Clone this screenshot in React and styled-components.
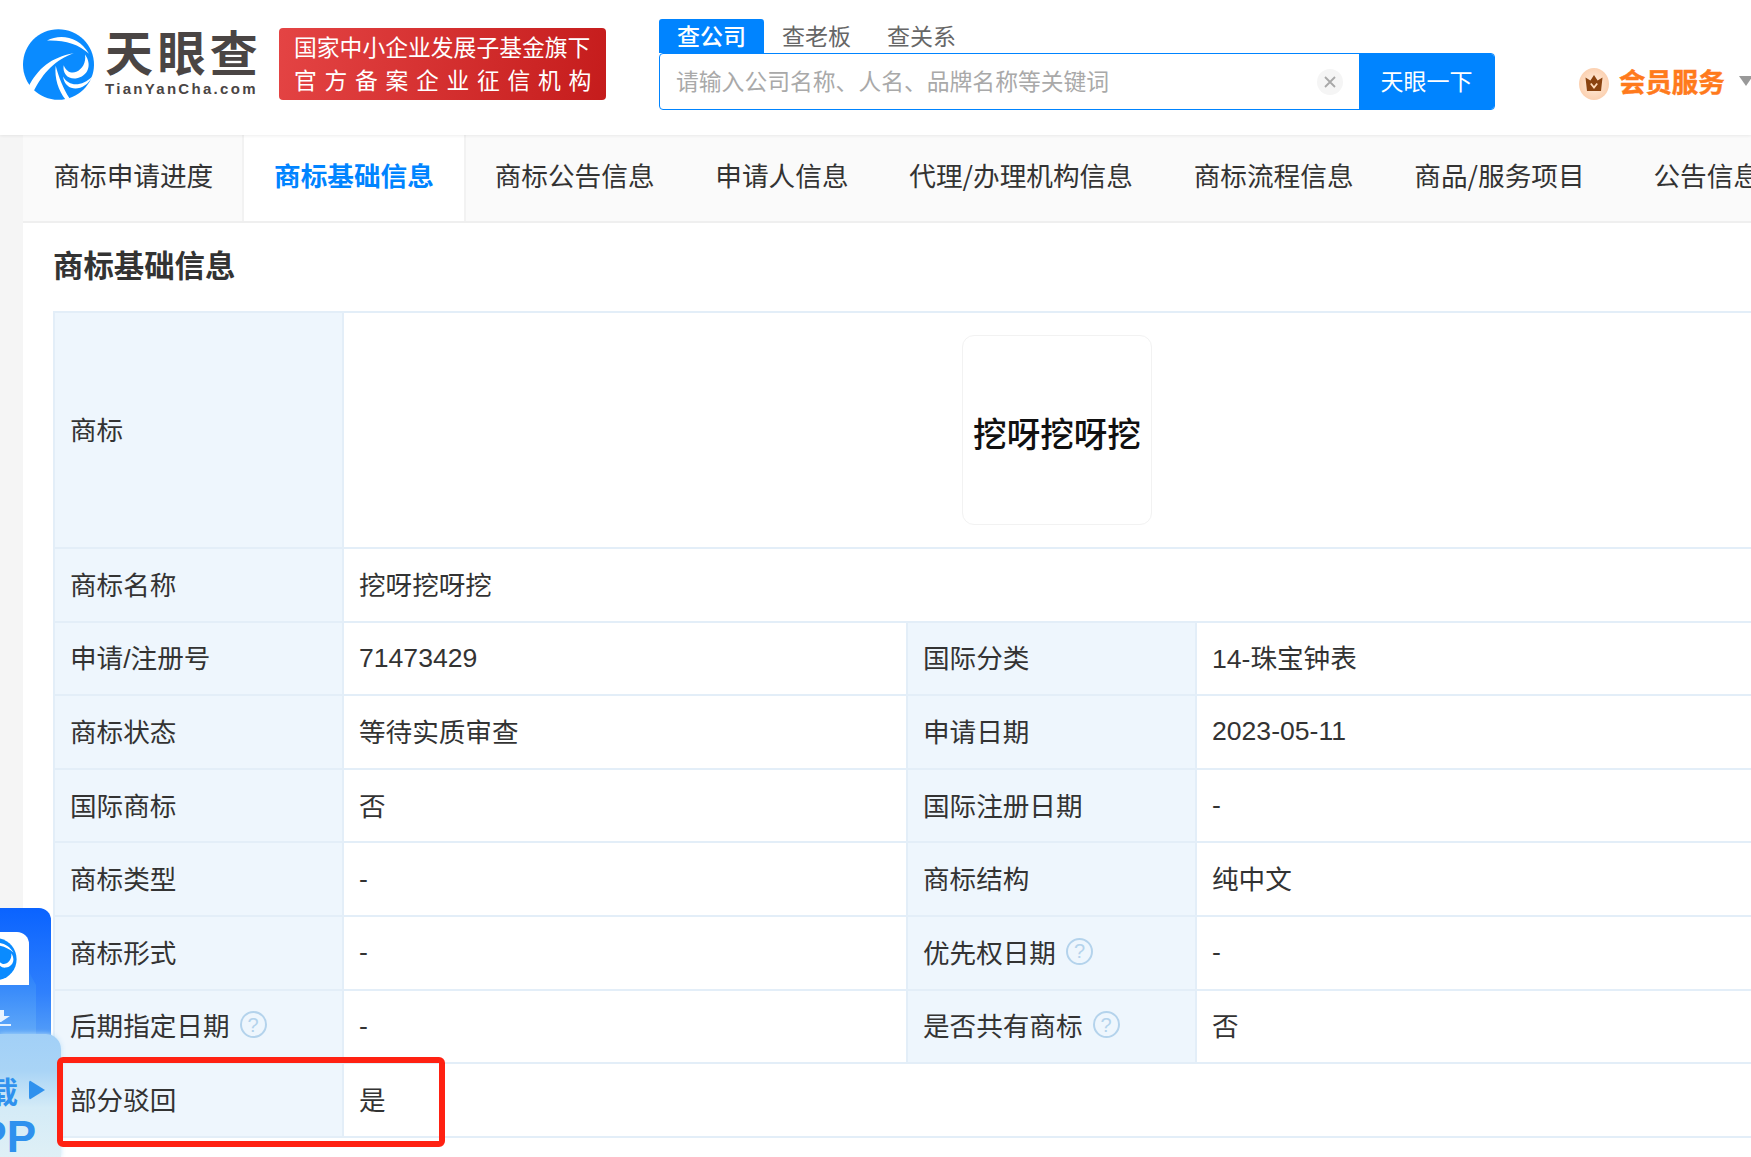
import React from "react";
import styled, { createGlobalStyle } from "styled-components";

const Global = createGlobalStyle`
  html, body { margin: 0; padding: 0; background: #fff; height: 100%; overflow: hidden; }
  * { box-sizing: border-box; }
  body { font-family: "Liberation Sans", "Noto Sans CJK SC", sans-serif; color: #333; }
`;

const Page = styled.div`
  position: relative;
  width: 1751px;
  height: 1157px;
  overflow: hidden;
  background: #fff;
`;

const Header = styled.header`
  position: relative;
  z-index: 2;
  display: flex;
  align-items: flex-start;
  height: 135px;
  background: #fff;
  box-shadow: 0 1px 3px rgba(0, 0, 0, 0.07);
`;

const Logo = styled.div`
  display: flex;
  align-items: flex-start;
  gap: 11px;
  margin: 29px 0 0 23px;
  width: 256px;
  flex: none;
`;

const LogoWords = styled.div`
  display: flex;
  flex-direction: column;
  width: 153px;
`;

const LogoName = styled.div`
  font-family: "Noto Sans CJK SC", sans-serif;
  font-size: 48px;
  line-height: 43px;
  height: 43px;
  font-weight: 700;
  color: #4a4544;
  letter-spacing: 4.4px;
  white-space: nowrap;
`;

const LogoDomain = styled.div`
  margin-top: 8px;
  font-family: "Liberation Sans", sans-serif;
  font-weight: 700;
  font-size: 15px;
  line-height: 18px;
  letter-spacing: 2.3px;
  color: #4a4544;
  white-space: nowrap;
`;

const Badge = styled.div`
  flex: none;
  width: 327px;
  height: 72px;
  margin-top: 28px;
  padding: 3px 0 0 15px;
  border-radius: 4px;
  background: linear-gradient(100deg, #e44444, #c51c1c);
  color: #fff;
  font-family: "Noto Sans CJK SC", sans-serif;
  font-size: 22.8px;
  line-height: 32.5px;
  white-space: nowrap;
`;

const BadgeWide = styled.div`
  letter-spacing: 7.7px;
`;

const SearchArea = styled.div`
  flex: none;
  width: 836px;
  margin: 19px 0 0 53px;
`;

const SearchTabs = styled.div`
  display: flex;
  height: 34px;
`;

const SearchTab = styled.div`
  width: 105px;
  border-radius: 3px 3px 0 0;
  text-align: center;
  font-family: "Noto Sans CJK SC", sans-serif;
  font-size: 23px;
  line-height: 32px;
  color: ${(p) => (p.$active ? "#fff" : "#666")};
  background: ${(p) => (p.$active ? "#0084ff" : "transparent")};
  font-weight: ${(p) => (p.$active ? 500 : 400)};
`;

const SearchBox = styled.div`
  display: flex;
  align-items: stretch;
  height: 57px;
  border: 1.5px solid #0084ff;
  border-radius: 4px;
  overflow: hidden;
  background: #fff;
`;

const Placeholder = styled.div`
  flex: 1;
  padding-left: 16px;
  font-family: "Noto Sans CJK SC", sans-serif;
  font-size: 22.8px;
  line-height: 53px;
  color: #a9a9a9;
`;

const ClearBtn = styled.div`
  align-self: center;
  display: flex;
  align-items: center;
  justify-content: center;
  width: 26px;
  height: 26px;
  margin-right: 16px;
  border-radius: 50%;
  background: #f5f5f5;
`;

const SearchBtn = styled.div`
  width: 135px;
  text-align: center;
  background: #0084ff;
  color: #fff;
  font-family: "Noto Sans CJK SC", sans-serif;
  font-size: 23px;
  line-height: 52px;
`;

const Member = styled.div`
  display: flex;
  align-items: center;
  flex: none;
  margin: 68px 0 0 84px;
  height: 32px;
`;

const MemberText = styled.span`
  margin: 0 0 7px 10px;
  font-family: "Noto Sans CJK SC", sans-serif;
  font-weight: 700;
  font-size: 26.4px;
  line-height: 30px;
  color: #ff7a1c;
  -webkit-text-stroke: 0.5px #ff7a1c;
  white-space: nowrap;
`;

const Caret = styled.span`
  flex: none;
  margin: 0 0 6px 14px;
  width: 0;
  height: 0;
  border-left: 7px solid transparent;
  border-right: 7px solid transparent;
  border-top: 10px solid #999;
`;

const Body = styled.div`
  display: flex;
  height: 1022px;
`;

const Gutter = styled.div`
  width: 23px;
  flex: none;
  background: #f5f5f5;
`;

const Main = styled.main`
  flex: 1;
  min-width: 0;
  background: #fff;
`;

const Tabs = styled.nav`
  display: flex;
  height: 88px;
  background: #fafafa;
  border-bottom: 2px solid #efefef;
  white-space: nowrap;
`;

const Tab = styled.div`
  flex: none;
  height: 86px;
  padding: 0 ${(p) => (p.$active ? "32.4px" : "30.4px")};
  margin: 0 ${(p) => (p.$active ? "-2px" : "0")};
  margin-left: ${(p) => (p.$lead ? "8px" : undefined)};
  font-family: "Noto Sans CJK SC", sans-serif;
  font-size: 26.65px;
  line-height: 79px;
  color: ${(p) => (p.$active ? "#0084ff" : "#333")};
  font-weight: ${(p) => (p.$active ? 700 : 400)};
  background: ${(p) => (p.$active ? "#fff" : "transparent")};
  box-shadow: ${(p) => (p.$active ? "inset 2px 0 #f2f2f2, inset -2px 0 #f2f2f2" : "none")};
`;

const Content = styled.section`
  padding-left: 30px;
`;

const Title = styled.h2`
  margin: 0;
  height: 88px;
  font-family: "Noto Sans CJK SC", sans-serif;
  font-size: 30.4px;
  line-height: 83px;
  font-weight: 700;
  color: #333;
`;

const InfoTable = styled.table`
  table-layout: fixed;
  width: 1800px;
  border-collapse: collapse;
  font-size: 26.6px;
`;

const Cell = styled.td`
  height: ${(p) => (p.$tall ? "236px" : "73.6px")};
  padding: 0 15px ${(p) => (p.$num ? "0" : "3px")};
  border: 2px solid #e3eef8;
  color: #333;
  white-space: nowrap;
  vertical-align: middle;
`;

const Label = styled(Cell).attrs({ as: "th" })`
  font-weight: 400;
  text-align: left;
  background: #eef6fd;
`;

const LabelInner = styled.span`
  display: inline-flex;
  align-items: center;
  gap: 10px;
`;

const Help = styled.span`
  display: inline-flex;
  align-items: center;
  justify-content: center;
  width: 27px;
  height: 27px;
  border: 2px solid #b4d3ec;
  border-radius: 50%;
  color: #b4d3ec;
  font-size: 20px;
  line-height: 1;
`;

const MarkCell = styled(Cell)`
  padding: 0;
`;

const MarkFrame = styled.div`
  display: flex;
  align-items: center;
  justify-content: center;
  width: 190px;
  height: 190px;
  margin: 0 0 0 618px;
  border: 1px solid #f2f2f2;
  border-radius: 12px;
  background: #fff;
  font-family: "Noto Sans CJK SC", sans-serif;
  font-size: 33.6px;
  font-weight: 500;
  color: #111;
  white-space: nowrap;
  padding-top: 4px;
`;

const Highlight = styled.div`
  position: absolute;
  left: 57px;
  top: 1057px;
  width: 388px;
  height: 90px;
  border: 6px solid #ff2112;
  border-radius: 6px;
  z-index: 4;
`;

const Float = styled.aside`
  position: absolute;
  left: 0;
  top: 908px;
  width: 62px;
  height: 249px;
  z-index: 3;
`;

const DownloadCard = styled.div`
  position: absolute;
  left: 0;
  top: 0;
  width: 51px;
  height: 140px;
  overflow: hidden;
  border-radius: 0 12px 0 0;
  background: linear-gradient(180deg, #0a63ff 0%, #2f80fc 60%, #5ea6f6 100%);
`;

const PhoneCard = styled.div`
  position: absolute;
  left: 0;
  top: 24px;
  width: 29px;
  height: 56px;
  overflow: hidden;
  background: #fff;
  border-radius: 0 12px 0 0;
`;

const CardFold = styled.div`
  position: absolute;
  left: 0;
  top: 64px;
  width: 36px;
  height: 76px;
  background: linear-gradient(180deg, #2a80fb, #6db2f7);
  clip-path: polygon(0 13px, 29px 13px, 29px 0, 36px 13px, 36px 100%, 0 100%);
`;

const ArrowMark = styled.svg`
  position: absolute;
  left: 0;
  top: 102px;
`;

const AppCard = styled.div`
  position: absolute;
  left: 0;
  top: 126px;
  width: 61px;
  height: 123px;
  overflow: hidden;
  display: flex;
  flex-direction: column;
  align-items: flex-end;
  border-radius: 0 15px 0 0;
  background: linear-gradient(180deg, #a2d0f7 0%, #a9d4f6 30%, #d4ebf7 60%, #dff0f6 100%);
  box-shadow: 0 0 5px rgba(190, 225, 248, 0.9);
  color: #2f91ee;
  font-family: "Noto Sans CJK SC", sans-serif;
  font-weight: 700;
`;

const AppLine = styled.div`
  display: flex;
  align-items: center;
  gap: 11px;
  margin-top: 38px;
  padding-right: 16px;
  font-size: 30px;
  line-height: 36px;
  white-space: nowrap;
`;

const AppTriangle = styled.span`
  width: 0;
  height: 0;
  border-top: 10px solid transparent;
  border-bottom: 10px solid transparent;
  border-left: 16px solid #2f91ee;
  border-radius: 3px;
`;

const AppWord = styled.div`
  font-family: "Liberation Sans", sans-serif;
  font-size: 44px;
  line-height: 44px;
  margin-top: 7px;
  padding-right: 25px;
  white-space: nowrap;
`;

const Swirl = () => (
  <svg width="71" height="71" viewBox="0 0 213 212" style={{ flex: "none", display: "block" }}>
    <path d="M106 0C165 0 213 47 213 106c0 59-48 106-107 106C47 212 0 165 0 106 0 47 47 0 106 0Z" fill="#0a8bff" />
    <path d="M72 34C110 14 168 20 198 74 168 44 122 32 72 34Z" fill="#fff" />
    <path d="M16 174C44 118 84 84 152 72 98 92 62 126 30 190Z" fill="#fff" />
    <path d="M98 110C94 148 106 184 128 212L140 208C120 178 108 146 98 110Z" fill="#fff" />
    <path d="M186 76C208 106 196 142 158 148 134 150 118 132 122 108 130 128 146 134 160 128 178 120 190 100 186 76Z" fill="#fff" />
    <path d="M120 142C138 174 178 172 208 142 188 186 128 194 120 142Z" fill="#fff" />
  </svg>
);

const Crown = () => (
  <svg width="30" height="32" viewBox="0 0 30 32" style={{ flex: "none" }}>
    <defs>
      <radialGradient id="crownBg" cx="0.5" cy="0.5" r="0.6">
        <stop offset="0" stopColor="#ffeede" />
        <stop offset="1" stopColor="#fbcba8" />
      </radialGradient>
    </defs>
    <ellipse cx="15" cy="16" rx="15" ry="16" fill="url(#crownBg)" />
    <path d="M15 7l3.6 5.4L23.5 9.5 22 23H8L6.5 9.5l4.9 2.9Z" fill="#8a4310" />
    <path d="M11.8 15.5 15 19.5l3.2-4" fill="none" stroke="#ffd9b8" strokeWidth="1.8" />
  </svg>
);

const ClearIcon = () => (
  <svg width="14" height="14" viewBox="0 0 14 14">
    <path d="M2 2l10 10M12 2 2 12" stroke="#a8a8a8" strokeWidth="1.8" />
  </svg>
);

const tabs = ["商标申请进度", "商标基础信息", "商标公告信息", "申请人信息", "代理/办理机构信息", "商标流程信息", "商品/服务项目", "公告信息"];

const rows = [
  ["申请/注册号", "71473429", "国际分类", "14-珠宝钟表"],
  ["商标状态", "等待实质审查", "申请日期", "2023-05-11"],
  ["国际商标", "否", "国际注册日期", "-"],
  ["商标类型", "-", "商标结构", "纯中文"],
  ["商标形式", "-", "优先权日期", "-", false, true],
  ["后期指定日期", "-", "是否共有商标", "否", true, true],
];

const isLatin = (s) => /^[\x00-\x7f]+$/.test(s);

const LabelText = ({ text, help }) => (
  <LabelInner>
    {text}
    {help && <Help>?</Help>}
  </LabelInner>
);

export default function App() {
  return (
    <Page>
      <Global />
      <Header>
        <Logo>
          <Swirl />
          <LogoWords>
            <LogoName>天眼查</LogoName>
            <LogoDomain>TianYanCha.com</LogoDomain>
          </LogoWords>
        </Logo>
        <Badge>
          <div>国家中小企业发展子基金旗下</div>
          <BadgeWide>官方备案企业征信机构</BadgeWide>
        </Badge>
        <SearchArea>
          <SearchTabs>
            <SearchTab $active>查公司</SearchTab>
            <SearchTab>查老板</SearchTab>
            <SearchTab>查关系</SearchTab>
          </SearchTabs>
          <SearchBox>
            <Placeholder>请输入公司名称、人名、品牌名称等关键词</Placeholder>
            <ClearBtn>
              <ClearIcon />
            </ClearBtn>
            <SearchBtn>天眼一下</SearchBtn>
          </SearchBox>
        </SearchArea>
        <Member>
          <Crown />
          <MemberText>会员服务</MemberText>
          <Caret />
        </Member>
      </Header>
      <Body>
        <Gutter />
        <Main>
          <Tabs>
            {tabs.map((t, i) => (
              <Tab key={t} $active={i === 1} $lead={i === 7}>
                {t}
              </Tab>
            ))}
          </Tabs>
          <Content>
            <Title>商标基础信息</Title>
            <InfoTable>
              <colgroup>
                <col width="289" />
                <col width="564" />
                <col width="289" />
                <col />
              </colgroup>
              <tbody>
                <tr>
                  <Label $tall>商标</Label>
                  <MarkCell colSpan={3} $tall>
                    <MarkFrame>挖呀挖呀挖</MarkFrame>
                  </MarkCell>
                </tr>
                <tr>
                  <Label>商标名称</Label>
                  <Cell colSpan={3}>挖呀挖呀挖</Cell>
                </tr>
                {rows.map(([a, b, c, d, helpA, helpC]) => (
                  <tr key={a}>
                    <Label>
                      <LabelText text={a} help={helpA} />
                    </Label>
                    <Cell $num={isLatin(b)}>{b}</Cell>
                    <Label>
                      <LabelText text={c} help={helpC} />
                    </Label>
                    <Cell $num={isLatin(d)}>{d}</Cell>
                  </tr>
                ))}
                <tr>
                  <Label>部分驳回</Label>
                  <Cell colSpan={3}>是</Cell>
                </tr>
              </tbody>
            </InfoTable>
          </Content>
        </Main>
      </Body>
      <Float>
        <DownloadCard>
          <PhoneCard>
            <svg width="60" height="56" viewBox="0 0 60 56" style={{ marginLeft: -26, marginTop: 6, display: "block" }}>
              <g transform="scale(0.2)">
                <path d="M106 0C165 0 213 47 213 106c0 59-48 106-107 106C47 212 0 165 0 106 0 47 47 0 106 0Z" fill="#0a8bff" />
                <path d="M72 34C110 14 168 20 198 74 168 44 122 32 72 34Z" fill="#fff" />
                <path d="M186 76C208 106 196 142 158 148 134 150 118 132 122 108 130 128 146 134 160 128 178 120 190 100 186 76Z" fill="#fff" />
              </g>
            </svg>
          </PhoneCard>
          <CardFold />
          <ArrowMark width="12" height="16" viewBox="0 0 12 16">
            <path d="M0 0h4v6h6L1 12H0ZM0 14h11v2H0Z" fill="#e8f3ff" />
          </ArrowMark>
        </DownloadCard>
        <AppCard>
          <AppLine>
            下载
            <AppTriangle />
          </AppLine>
          <AppWord>APP</AppWord>
        </AppCard>
      </Float>
      <Highlight />
    </Page>
  );
}
